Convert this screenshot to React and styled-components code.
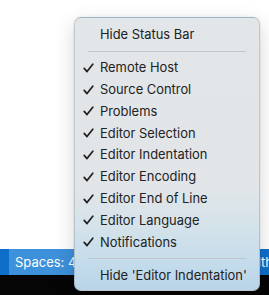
import React from 'react';
import styled, { createGlobalStyle } from 'styled-components';

const GlobalStyle = createGlobalStyle`
  html, body {
    margin: 0;
    padding: 0;
    overflow: hidden;
    background: #ffffff;
  }
`;

// page
const Screen = styled.div`
  position: relative;
  width: 269px;
  height: 295px;
  display: flex;
  flex-direction: column;
  overflow: hidden;
  font-family: Inter, 'Liberation Sans', sans-serif;
`;

const Workspace = styled.div`
  flex: 1;
  background: #ffffff;
`;

const StatusBar = styled.div`
  height: 26px;
  display: flex;
  align-items: stretch;
  background: #0d6fca;
  color: #ffffff;
  font-size: 13px;
  padding-left: 9px;
`;

const StatusItem = styled.div`
  display: flex;
  align-items: center;
  padding: 0 6px;
  white-space: nowrap;
  background: ${(p) => (p.$active ? '#3d90da' : 'transparent')};
  margin-left: ${(p) => (p.$right ? 'auto' : '0')};
  margin-right: ${(p) => (p.$right ? '-10px' : '0')};
`;

const BottomStrip = styled.div`
  height: 20px;
  background: #050505;
`;

// menu
const Menu = styled.div`
  position: absolute;
  left: 74px;
  top: 17px;
  width: 186px;
  height: 274px;
  box-sizing: border-box;
  padding: 6px 0 4px 0;
  border-radius: 7px;
  border: 1px solid rgba(0, 0, 0, 0.14);
  background: linear-gradient(
    to bottom,
    #e3e6e9 0%,
    #e1e5e8 62%,
    #d5e3ea 76%,
    #c6ddeb 88%,
    #b9d5e9 100%
  );
  box-shadow: 0 6px 20px rgba(0, 0, 0, 0.16), 0 0 3px rgba(0, 0, 0, 0.08);
  display: flex;
  flex-direction: column;
`;

const Row = styled.div`
  height: 22px;
  display: flex;
  align-items: center;
  padding-left: 8px;
  color: #222222;
  font-size: 12.9px;
  white-space: nowrap;
`;

const CheckCell = styled.span`
  width: 17px;
  display: flex;
  align-items: center;
`;

const Separator = styled.div`
  height: 1px;
  margin: 5px 13px 5px 13px;
  background: #c3c6c9;
`;

const Check = () => (
  <svg width="11" height="10" viewBox="0 0 11 10">
    <path
      d="M1.2 5.4 L4 8.6 L9.8 1.2"
      fill="none"
      stroke="#1f1f1f"
      strokeWidth="1.7"
      strokeLinecap="round"
      strokeLinejoin="round"
    />
  </svg>
);

const items = [
  'Remote Host',
  'Source Control',
  'Problems',
  'Editor Selection',
  'Editor Indentation',
  'Editor Encoding',
  'Editor End of Line',
  'Editor Language',
  'Notifications',
];

const MenuRow = ({ checked, label }) => (
  <Row>
    <CheckCell>{checked && <Check />}</CheckCell>
    {label}
  </Row>
);

export default function App() {
  return (
    <>
      <GlobalStyle />
      <Screen>
        <Workspace />
        <StatusBar>
          <StatusItem $active>Spaces: 4</StatusItem>
          <StatusItem $right>Width</StatusItem>
        </StatusBar>
        <BottomStrip />

        <Menu>
          <MenuRow label="Hide Status Bar" />
          <Separator />
          {items.map((label) => (
            <MenuRow key={label} checked label={label} />
          ))}
          <Separator />
          <MenuRow label="Hide 'Editor Indentation'" />
        </Menu>
      </Screen>
    </>
  );
}
